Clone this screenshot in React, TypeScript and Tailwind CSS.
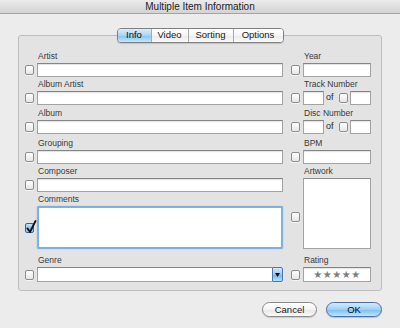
import React from "react"

const field = "h-full bg-white border border-[#a3a3a3] border-t-[#858585] shadow-[inset_0_1px_1px_rgba(0,0,0,0.12)]"

function Check({ checked = false }: { checked?: boolean }) {
  if (checked) {
    return (
      <div className="relative w-[9px] h-[10px] rounded-[2px] border border-[#3d5f8f] bg-[linear-gradient(to_bottom,#c9e4fa,#80bdf0_55%,#a6d4f7)]">
        <svg className="absolute left-[0px] top-[-4px]" width="11" height="14" viewBox="0 0 11 14">
          <path d="M1.5 8.5 L4 12 L9.5 1" fill="none" stroke="#111" strokeWidth="1.8" strokeLinecap="round" strokeLinejoin="round" />
        </svg>
      </div>
    )
  }
  return (
    <div className="w-[9px] h-[10px] rounded-[2px] border border-[#8d8d8d] bg-[linear-gradient(to_bottom,#ffffff,#e6e6e6)] shadow-[0_1px_0_rgba(255,255,255,0.6)]" />
  )
}

function Label({ text }: { text: string }) {
  return <div className="flex items-end pb-[2px] pl-[1px] text-[8.5px] leading-[9px] text-[#3a3a3a]">{text}</div>
}

function CheckCell() {
  return (
    <div className="flex items-center">
      <Check />
    </div>
  )
}

function RightCheck() {
  return (
    <div className="flex items-center pl-[8px]">
      <Check />
    </div>
  )
}

function Tab({ text, width, active = false, last = false }: { text: string; width: string; active?: boolean; last?: boolean }) {
  return (
    <div
      className={
        "flex items-center justify-center h-full " + width + " " +
        (active
          ? "bg-[linear-gradient(to_bottom,#d9eefc,#a9d5f5_50%,#86c2ef_51%,#c4e6fb)] text-[#0d0d0d]"
          : "bg-[linear-gradient(to_bottom,#ffffff,#f5f5f5_50%,#eaeaea_51%,#fafafa)] text-[#1a1a1a]") +
        (last ? "" : " border-r border-[#a9a9a9]")
      }
    >
      {text}
    </div>
  )
}

export default function App() {
  return (
    <div className="w-[400px] h-[328px] bg-[#ececec] flex flex-col font-['Liberation_Sans','DejaVu_Sans',Arial,sans-serif] overflow-hidden">
      <div className="h-[14px] flex items-center justify-center text-[10px] text-[#1e1e1e] border-b border-[#a4a4a4] bg-[linear-gradient(to_bottom,#ebebeb,#d3d3d3)]">
        Multiple Item Information
      </div>

      <div className="px-[18px] pt-[14px]">
        <div className="relative z-10 flex justify-center">
          <div className="flex h-[15px] rounded-[4px] border border-[#808080] overflow-hidden text-[9.5px] shadow-[0_1px_1px_rgba(0,0,0,0.15)]">
            <Tab text="Info" width="w-[34px]" active />
            <Tab text="Video" width="w-[37px]" />
            <Tab text="Sorting" width="w-[45px]" />
            <Tab text="Options" width="w-[49px]" last />
          </div>
        </div>

        <div className="-mt-[8px] h-[256px] border border-[#bdbdbd] rounded-[3px] bg-[#e3e3e3] pl-[6px] pt-[13px]">
          <div className="grid grid-cols-[12px_246px_20px_68px] grid-rows-[14px_14px_14px_14px_15px_14px_16px_14px_14px_14px_14px_43px_18px_15px]">
            {/* artist / year */}
            <div />
            <Label text="Artist" />
            <div />
            <Label text="Year" />
            <CheckCell />
            <div className={field} />
            <RightCheck />
            <div className={field} />

            {/* album artist / track number */}
            <div />
            <Label text="Album Artist" />
            <div />
            <Label text="Track Number" />
            <CheckCell />
            <div className={field} />
            <RightCheck />
            <div className="flex items-center h-full">
              <div className={field + " w-[21px]"} />
              <span className="w-[9px] ml-[2px] text-[9px] text-[#2a2a2a]">of</span>
              <div className="ml-[4px]">
                <Check />
              </div>
              <div className={field + " w-[21px] ml-[2px]"} />
            </div>

            {/* album / disc number */}
            <div />
            <Label text="Album" />
            <div />
            <Label text="Disc Number" />
            <CheckCell />
            <div className={field} />
            <RightCheck />
            <div className="flex items-center h-full">
              <div className={field + " w-[21px]"} />
              <span className="w-[9px] ml-[2px] text-[9px] text-[#2a2a2a]">of</span>
              <div className="ml-[4px]">
                <Check />
              </div>
              <div className={field + " w-[21px] ml-[2px]"} />
            </div>

            {/* grouping / bpm */}
            <div />
            <Label text="Grouping" />
            <div />
            <Label text="BPM" />
            <CheckCell />
            <div className={field} />
            <RightCheck />
            <div className={field} />

            {/* composer / artwork */}
            <div />
            <Label text="Composer" />
            <div />
            <Label text="Artwork" />
            <CheckCell />
            <div className={field} />
            <div className="row-span-3 flex items-center pl-[8px] pt-[6px]">
              <Check />
            </div>
            <div className="row-span-3 bg-white border border-[#a3a3a3] border-t-[#8c8c8c]" />

            {/* comments */}
            <div />
            <Label text="Comments" />
            <div className="flex items-center">
              <Check checked />
            </div>
            <div className="bg-white rounded-[2px] border-2 border-[#7fb0e3] shadow-[0_0_1px_#5d95d2]" />

            {/* genre / rating */}
            <div />
            <Label text="Genre" />
            <div />
            <Label text="Rating" />
            <CheckCell />
            <div className="flex h-full">
              <div className="flex-1 bg-white border border-[#a3a3a3] border-t-[#858585] border-r-0" />
              <div className="w-[11px] h-full flex items-center justify-center rounded-r-[2px] border border-[#4f77ad] bg-[linear-gradient(to_bottom,#d1eafc,#94cbf4_50%,#6fb5ee_51%,#b7e0fb)]">
                <svg width="5" height="4" viewBox="0 0 5 4">
                  <path d="M0 0 H5 L2.5 4 Z" fill="#111" />
                </svg>
              </div>
            </div>
            <RightCheck />
            <div className={field + " flex items-center justify-center text-[10px] leading-[10px] text-[#7d7d7d] tracking-[0.5px]"}>
              ★★★★★
            </div>
          </div>
        </div>

        <div className="flex justify-end gap-[9px] mt-[11px]">
          <button className="w-[55px] h-[15px] rounded-full border border-[#8a8a8a] text-[9.5px] leading-[13px] text-[#1a1a1a] bg-[linear-gradient(to_bottom,#ffffff,#f3f3f3_50%,#e6e6e6_51%,#fbfbfb)] shadow-[0_1px_1px_rgba(0,0,0,0.15)]">
            Cancel
          </button>
          <button className="w-[56px] h-[15px] rounded-full border border-[#4a6fa6] text-[9.5px] leading-[13px] text-[#0d0d0d] bg-[linear-gradient(to_bottom,#d4ecfc,#9dd0f5_50%,#7abdf0_51%,#c0e5fb)] shadow-[0_1px_1px_rgba(0,0,0,0.2)]">
            OK
          </button>
        </div>
      </div>
    </div>
  )
}
